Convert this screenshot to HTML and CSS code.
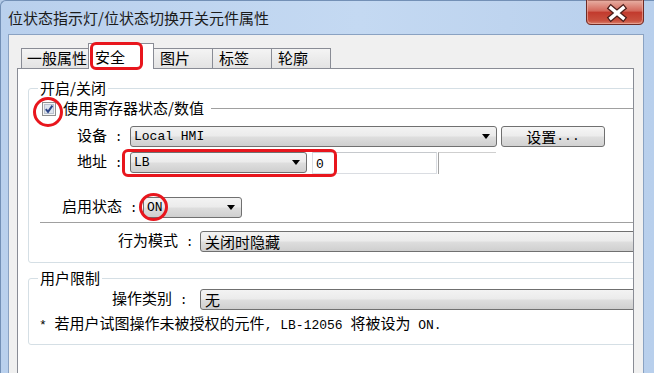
FILE: index.html
```html
<!DOCTYPE html>
<html lang="zh-CN">

<head>
    <meta charset="UTF-8">
    <meta name="viewport" content="width=device-width, initial-scale=1.0">
    <title>位状态指示灯/位状态切换开关元件属性</title>
    <link rel="stylesheet" href="styles.css">
</head>

<body>
    <div class="window">
        <!-- Title bar -->
        <div class="titlebar">
            <span class="title">位状态指示灯/位状态切换开关元件属性</span>
            <div class="close">
                <svg width="58" height="25" viewBox="0 0 58 25">
                    <defs>
                        <linearGradient id="closeGrad" x1="0" y1="0" x2="0" y2="1">
                            <stop offset="0" stop-color="#e8b2a6" />
                            <stop offset="0.45" stop-color="#d3675a" />
                            <stop offset="0.5" stop-color="#c23a2d" />
                            <stop offset="0.85" stop-color="#c9513f" />
                            <stop offset="1" stop-color="#dc8a76" />
                        </linearGradient>
                    </defs>
                    <path d="M0.5 0 V20 Q0.5 24.5 5 24.5 H53 Q57.5 24.5 57.5 20 V0 Z" fill="url(#closeGrad)" stroke="#6e2b25" />
                    <path d="M1.5 0 V19.5 Q1.5 23.5 5.5 23.5 H52.5 Q56.5 23.5 56.5 19.5 V0" fill="none" stroke="#f0b8ab" stroke-opacity="0.6" />
                    <path d="M25 8 L37 18 M37 8 L25 18" stroke="#4b1d19" stroke-width="6" stroke-linecap="square" />
                    <path d="M25 8 L37 18 M37 8 L25 18" stroke="#ffffff" stroke-width="3.5" stroke-linecap="square" />
                </svg>
            </div>
        </div>

        <div class="client">
            <!-- Tabs -->
            <div class="tabs">
                <div class="tab first">一般属性</div>
                <div class="tab active">安全<span class="mark mark-tab"></span></div>
                <div class="tab">图片</div>
                <div class="tab">标签</div>
                <div class="tab">轮廓</div>
            </div>

            <div class="panel">
                <fieldset class="group group-onoff">
                    <legend>开启/关闭</legend>

                    <fieldset class="sub">
                        <legend class="check-legend">
                            <span class="checkbox">
                                <svg width="14" height="14" viewBox="0 0 14 14">
                                    <rect x="0.5" y="0.5" width="13" height="13" fill="#f6f6f6" stroke="#8e8f8f" />
                                    <rect x="2.5" y="2.5" width="9" height="9" fill="#dde4ee" stroke="#b9c2cf" />
                                    <path d="M3.8 7.2 L6 9.8 L10.4 3.6" fill="none" stroke="#2c4588" stroke-width="2" />
                                </svg>
                                <span class="mark mark-check"></span>
                            </span>
                            使用寄存器状态/数值
                        </legend>

                        <div class="row row-device">
                            <span class="label lbl-device">设备<span class="en"> :</span></span>
                            <div class="combo combo-device"><span class="en">Local HMI</span><i class="arrow"></i></div>
                            <div class="button">设置<span class="en">...</span></div>
                        </div>

                        <div class="row row-addr">
                            <span class="label lbl-device">地址<span class="en"> :</span></span>
                            <div class="combo combo-addr"><span class="en">LB</span><i class="arrow"></i></div>
                            <div class="field field-addr"><span class="en">0</span></div>
                            <div class="field field-tail"></div>
                            <span class="mark mark-addr"></span>
                        </div>

                        <div class="row row-state">
                            <span class="label lbl-state">启用状态<span class="en"> :</span></span>
                            <div class="combo combo-state"><span class="en">ON</span><i class="arrow"></i><span class="mark mark-on"></span></div>
                        </div>
                    </fieldset>

                    <div class="row row-mode">
                        <span class="label lbl-mode">行为模式<span class="en"> :</span></span>
                        <div class="combo combo-wide">关闭时隐藏</div>
                    </div>
                </fieldset>

                <fieldset class="group group-user">
                    <legend>用户限制</legend>
                    <div class="row row-op">
                        <span class="label lbl-op">操作类别<span class="en"> :</span></span>
                        <div class="combo combo-wide">无</div>
                    </div>
                    <div class="note"><span class="en">* </span>若用户试图操作未被授权的元件<span class="en">, LB-12056 </span>将被设为<span class="en"> ON.</span></div>
                </fieldset>
            </div>
        </div>
    </div>
</body>

</html>
```

FILE: styles.css
```css
body {
    margin: 0;
    width: 654px;
    height: 373px;
    overflow: hidden;
    background: #b4cbe8;
    font-family: "Noto Sans CJK SC", sans-serif;
    font-size: 15px;
    line-height: 18px;
    color: #000;
}

.en {
    font-family: "Liberation Mono", monospace;
    font-size: 13px;
}

/* window frame */
.window {
    height: 373px;
    box-sizing: border-box;
    border-left: 1px solid #7390b6;
    border-top: 1px solid #7390b6;
    border-radius: 6px 0 0 0;
    background: linear-gradient(to right, #b9d0ed, #c4d9f2 55%, #b8cfec);
}

.titlebar {
    display: flex;
    height: 33px;
    padding-left: 7px;
}

.title {
    align-self: center;
    color: #1b1b1b;
    margin-top: 1px;
}

.close {
    margin-left: auto;
    margin-right: 10px;
    margin-top: -1px;
    height: 25px;
}

.close svg {
    display: block;
}

.client {
    margin: 0 10px 0 7px;
    height: 345px;
    box-sizing: border-box;
    padding: 8px 0 0 8px;
    background: #f0f0f0;
    border: 1px solid #8aa2c2;
    border-bottom: none;
}

/* tabs */
.tabs {
    display: flex;
    align-items: flex-end;
    height: 25px;
    padding-left: 4px;
}

.tab {
    box-sizing: border-box;
    height: 20px;
    width: 60px;
    margin-left: -1px;
    padding-left: 6px;
    border: 1px solid #898c95;
    border-bottom: none;
    background: linear-gradient(#f4f4f4, #e3e3e3);
}

.tab.first {
    margin-left: 0;
    width: 68px;
    padding-left: 5px;
}

.tab.active {
    position: relative;
    z-index: 1;
    width: 66px;
    height: 26px;
    margin-bottom: -1px;
    padding-top: 4px;
    background: #fff;
}

.panel {
    box-sizing: border-box;
    width: 617px;
    height: 310px;
    padding-left: 10px;
    border: 1px solid #898c95;
    background: #fff;
    overflow: hidden;
}

/* group boxes */
.group {
    box-sizing: border-box;
    width: 620px;
    min-width: 0;
    margin: 10px 0 0;
    padding: 0 0 10px 9px;
    border: 1px solid #d5dfe5;
    border-radius: 3px;
}

.group legend {
    padding: 0 2px;
}

.group-user {
    margin-top: 6px;
    padding-bottom: 9px;
}

.sub {
    min-width: 0;
    margin: 2px 0 0 2px;
    padding: 0 0 4px 0;
    border: none;
    border-top: 1px solid #a0a0a0;
    border-bottom: 1px solid #a0a0a0;
}

.sub .check-legend {
    display: flex;
    align-items: center;
    padding: 0 7px 0 0;
}

.checkbox {
    position: relative;
    width: 14px;
    height: 14px;
    margin: 1px 7px 0 2px;
}

.checkbox svg {
    display: block;
}

/* rows */
.row {
    position: relative;
    display: flex;
    align-items: center;
    height: 21px;
}

.row-device {
    margin-top: 9px;
}

.row-addr {
    margin-top: 5px;
}

.row-state {
    margin-top: 24px;
}

.row-mode {
    margin-top: 8px;
}

.row-op {
    margin-top: 2px;
}

.label {
    flex: none;
    white-space: pre;
}

.lbl-device {
    margin-left: 37px;
    width: 53px;
}

.lbl-state {
    margin-left: 22px;
    width: 81px;
}

.lbl-mode {
    margin-left: 80px;
    width: 82px;
}

.lbl-op {
    margin-left: 74px;
    width: 88px;
}

/* combo boxes */
.combo {
    position: relative;
    flex: none;
    display: flex;
    align-items: center;
    box-sizing: border-box;
    height: 21px;
    padding-left: 3px;
    border: 1px solid #707070;
    border-radius: 3px;
    background: linear-gradient(#f3f3f3 0%, #ebebeb 48%, #dedede 52%, #cfcfcf 100%);
}

.arrow {
    margin-left: auto;
    margin-right: 6px;
    border-left: 4px solid transparent;
    border-right: 4px solid transparent;
    border-top: 5px solid #000;
}

.combo-device {
    width: 367px;
}

.combo-addr {
    width: 177px;
}

.combo-state {
    width: 99px;
}

.combo-wide {
    width: 460px;
    padding-left: 4px;
}

.button {
    flex: none;
    display: flex;
    justify-content: center;
    align-items: center;
    box-sizing: border-box;
    width: 104px;
    height: 21px;
    margin-left: 4px;
    border: 1px solid #707070;
    border-radius: 3px;
    background: linear-gradient(#f6f6f6 0%, #ececec 48%, #dfdfdf 52%, #d2d2d2 100%);
}

.field {
    flex: none;
    box-sizing: border-box;
    height: 22px;
    background: #fff;
}

.field-addr {
    width: 125px;
    margin-left: 5px;
    padding-left: 3px;
    border: 1px solid #dadde2;
    border-top-color: #c6c9cd;
}

.field-tail {
    width: 58px;
    margin-left: 1px;
    border-left: 1px solid #a3a3a3;
    border-top: 1px solid #cfcfcf;
}

.note {
    margin-top: 4px;
    margin-left: 1px;
    white-space: pre;
}

/* red annotation marks */
.mark {
    position: absolute;
    box-sizing: border-box;
    border: 3px solid #e8161d;
}

.mark-tab {
    left: 1px;
    top: -2px;
    width: 53px;
    height: 28px;
    border-radius: 6px;
}

.mark-check {
    left: -9px;
    top: -5px;
    width: 30px;
    height: 30px;
    border-radius: 50%;
}

.mark-addr {
    left: 82px;
    top: -3px;
    width: 215px;
    height: 28px;
    border-radius: 6px;
}

.mark-on {
    left: -5px;
    top: -5px;
    width: 29px;
    height: 28px;
    border-radius: 50%;
}
```
